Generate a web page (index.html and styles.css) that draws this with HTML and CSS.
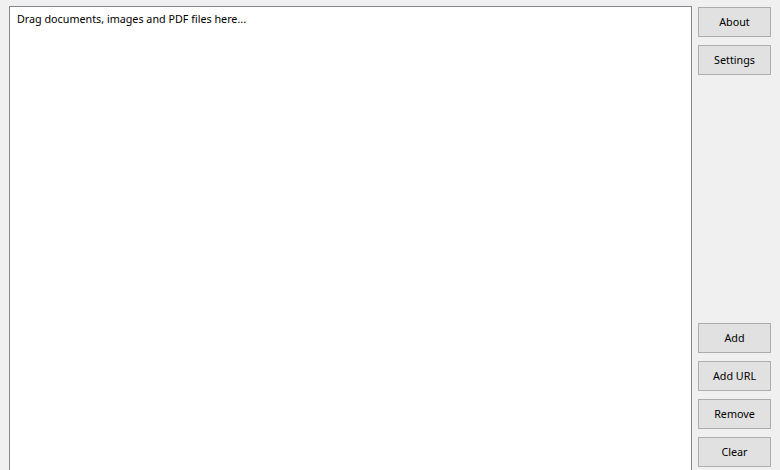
FILE: index.html
```html
<!DOCTYPE html>
<html>
<head>
<meta charset="utf-8">
<link rel="stylesheet" href="styles.css">
</head>
<body>
<div class="app">
  <div class="drop">Drag documents, images and PDF files here...</div>
  <div class="side">
    <div class="group">
      <button class="btn">About</button>
      <button class="btn">Settings</button>
    </div>
    <div class="group">
      <button class="btn">Add</button>
      <button class="btn">Add URL</button>
      <button class="btn">Remove</button>
      <button class="btn">Clear</button>
    </div>
  </div>
</div>
</body>
</html>
```

FILE: styles.css
```css
html, body {
  margin: 0;
  padding: 0;
  background: #f0f0f0;
  overflow: hidden;
  height: 470px;
}
.app {
  display: flex;
  padding: 6px 9px 0 9px;
  gap: 6px;
  font-family: "Noto Sans", "DejaVu Sans", sans-serif;
  font-size: 10.75px;
  color: #000;
}
.drop {
  flex: 0 0 683px;
  box-sizing: border-box;
  height: 480px;
  background: #fff;
  border: 1px solid #828790;
  padding: 3px 7px;
  line-height: 18px;
}
.side {
  flex: 1;
  display: flex;
  flex-direction: column;
  justify-content: space-between;
  height: 460px;
  padding-top: 1px;
}
.group {
  display: flex;
  flex-direction: column;
  gap: 8px;
}
.btn {
  width: 73px;
  height: 30px;
  box-sizing: border-box;
  background: #e1e1e1;
  border: 1px solid #adadad;
  font-family: inherit;
  font-size: 10.75px;
  color: #000;
  padding: 0;
}
```
